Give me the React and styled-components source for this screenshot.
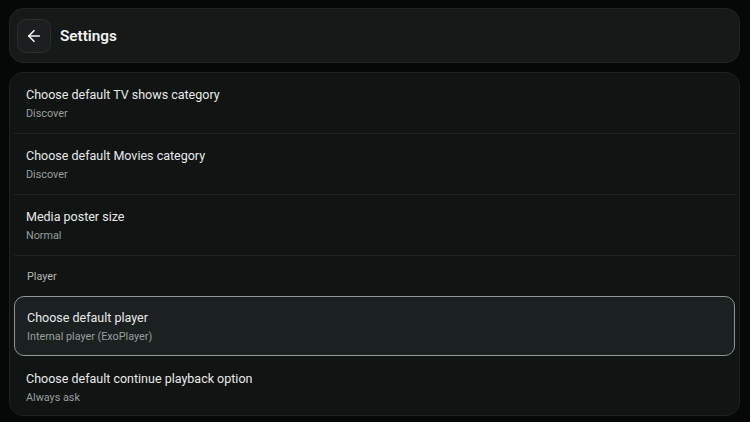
import React from "react";
import styled, { createGlobalStyle } from "styled-components";

const GlobalStyle = createGlobalStyle`
  html, body {
    margin: 0;
    padding: 0;
    background: #060807;
    font-family: Roboto, "Noto Sans", sans-serif;
  }
`;

const SETTINGS = [
  { title: "Choose default TV shows category", value: "Discover" },
  { title: "Choose default Movies category", value: "Discover" },
  { title: "Media poster size", value: "Normal" },
  { header: "Player" },
  { title: "Choose default player", value: "Internal player (ExoPlayer)", focused: true },
  { title: "Choose default continue playback option", value: "Always ask" },
];

const Page = styled.div`
  width: 750px;
  height: 422px;
  box-sizing: border-box;
  padding: 8px 10px 0 9px;
  display: flex;
  flex-direction: column;
  gap: 9px;
  overflow: hidden;
`;

const HeaderCard = styled.header`
  height: 55px;
  box-sizing: border-box;
  display: flex;
  align-items: center;
  gap: 9px;
  padding: 1px 7px 0;
  background: #151918;
  border: 1px solid #202423;
  border-radius: 14px;
`;

const BackButton = styled.button`
  width: 34px;
  height: 34px;
  display: flex;
  align-items: center;
  justify-content: center;
  padding: 0;
  background: #1b1f1f;
  border: 1px solid #2a2f2e;
  border-radius: 9px;
  color: #f2f2f2;
`;

const Title = styled.h1`
  margin: 0;
  font-size: 15.3px;
  font-weight: 600;
  color: #f1f2f2;
`;

const ListCard = styled.section`
  height: 344px;
  box-sizing: border-box;
  padding: 0 4px;
  background: #101413;
  border: 1px solid #1d2120;
  border-radius: 14px;
  overflow: hidden;
`;

const Row = styled.div`
  height: ${(p) => (p.$focused ? 60 : 61)}px;
  box-sizing: border-box;
  display: flex;
  flex-direction: column;
  justify-content: center;
  gap: 5px;
  padding: 1px 12px 0;
  border-radius: ${(p) => (p.$focused ? "10px" : "0")};
  border: ${(p) => (p.$focused ? "1.5px solid #8e9492" : "none")};
  border-bottom: ${(p) =>
    p.$focused ? "1.5px solid #8e9492" : p.$divider ? "1px solid #1f2423" : "none"};
  background: ${(p) => (p.$focused ? "#1b2120" : "transparent")};
`;

const RowTitle = styled.div`
  font-size: 12.5px;
  color: #e8eaea;
  line-height: 15px;
`;

const RowValue = styled.div`
  font-size: 10.8px;
  color: #9a9f9e;
  line-height: 13px;
`;

const SectionHeader = styled.div`
  height: 40px;
  display: flex;
  align-items: center;
  padding: 0 13px;
  font-size: 10.8px;
  color: #b4b8b7;
`;

const ArrowIcon = () => (
  <svg width="18" height="18" viewBox="0 0 24 24" fill="none" stroke="currentColor" strokeWidth="2.2" strokeLinecap="round" strokeLinejoin="round">
    <path d="M19 12H5" />
    <path d="M12 19l-7-7 7-7" />
  </svg>
);

export default function App() {
  return (
    <>
      <GlobalStyle />
      <Page>
        <HeaderCard>
          <BackButton aria-label="Back">
            <ArrowIcon />
          </BackButton>
          <Title>Settings</Title>
        </HeaderCard>
        <ListCard>
          {SETTINGS.map((item, i) =>
            item.header ? (
              <SectionHeader key={i}>{item.header}</SectionHeader>
            ) : (
              <Row key={i} $focused={item.focused} $divider={i < 3}>
                <RowTitle>{item.title}</RowTitle>
                <RowValue>{item.value}</RowValue>
              </Row>
            )
          )}
        </ListCard>
      </Page>
    </>
  );
}
